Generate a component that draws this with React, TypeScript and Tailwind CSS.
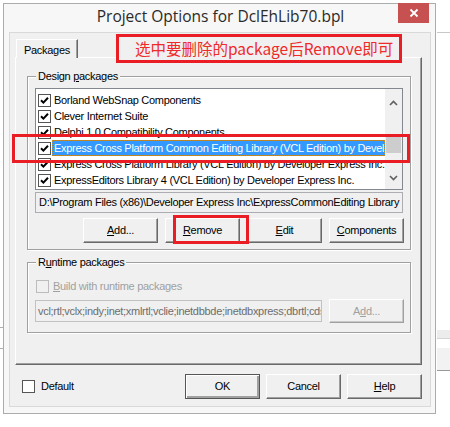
import React from 'react';

const rows = [
  'Borland WebSnap Components',
  'Clever Internet Suite',
  'Delphi 1.0 Compatibility Components',
  'Express Cross Platform Common Editing Library (VCL Edition) by Developer Express Inc.',
  'Express Cross Platform Library (VCL Edition) by Developer Express Inc.',
  'ExpressEditors Library 4 (VCL Edition) by Developer Express Inc.',
];

function Check({ on = true, disabled = false }: { on?: boolean; disabled?: boolean }) {
  return (
    <span
      className={
        disabled
          ? 'w-[13px] h-[13px] shrink-0 border border-[#bcbcbc] bg-[#f0f0f0]'
          : 'w-[13px] h-[13px] shrink-0 border border-[#555] bg-white flex items-center justify-center'
      }
    >
      {on && (
        <svg width="11" height="11" viewBox="0 0 11 11">
          <path d="M2 5.2 L4.4 7.6 L9 2.8" fill="none" stroke="#000" strokeWidth="2" />
        </svg>
      )}
    </span>
  );
}

function Btn({ children, def = false, disabled = false }: { children: React.ReactNode; def?: boolean; disabled?: boolean }) {
  let cls =
    'w-[75px] h-[25px] shrink-0 flex items-center justify-center bg-[#f0f0f0] border border-t-white border-l-white border-r-[#696969] border-b-[#696969] shadow-[inset_-1px_-1px_0_#a0a0a0] text-black';
  if (def)
    cls =
      'w-[75px] h-[25px] shrink-0 flex items-center justify-center bg-[#f0f0f0] border border-[#555] shadow-[inset_1px_1px_0_#fff,inset_-2px_-2px_0_#a0a0a0] text-black';
  if (disabled)
    cls =
      'w-[75px] h-[24px] shrink-0 flex items-center justify-center bg-[#f0f0f0] border border-t-white border-l-white border-r-[#a0a0a0] border-b-[#a0a0a0] shadow-[inset_-1px_-1px_0_#c8c8c8] text-[#a0a0a0]';
  return <div className={cls}>{children}</div>;
}

function GroupBox({ label, className, children }: { label: React.ReactNode; className: string; children: React.ReactNode }) {
  return (
    <div className={'relative border border-[#a0a0a0] shadow-[inset_1px_1px_0_#fff,1px_1px_0_#fff] ' + className}>
      <span className="absolute -top-[8px] left-[8px] px-[2px] bg-[#f0f0f0] leading-[14px]">{label}</span>
      {children}
    </div>
  );
}

export default function App() {
  return (
    <div className="relative w-[450px] h-[427px] overflow-hidden bg-white pt-[3px] pl-[3px] font-['Liberation_Sans',Arial,sans-serif] text-[11px] tracking-[-0.3px] text-black">
      {/* bits of windows behind the dialog */}
      <div className="absolute left-[437px] top-[32px] w-[13px] h-[1px] bg-[#c8c8c8]" />
      <div className="absolute left-[437px] top-[330px] w-[13px] h-[9px] bg-[#ececec] border-b border-[#d4d4d4]" />
      <div className="absolute left-[437px] top-[348px] w-[13px] h-[23px] bg-[#f2f2f2] border-b border-[#9a9a9a]" />
      <div className="absolute left-0 top-[327px] w-[3px] h-[1px] bg-[#b0b0b0]" />
      <div className="absolute left-0 top-[348px] w-[3px] h-[1px] bg-[#b0b0b0]" />

      {/* dialog window */}
      <div className="flex flex-col w-[433px] h-[411px] border border-[#acacac] bg-[#f7f7f7]">
        <div className="relative h-[28px] flex items-center justify-center">
          <span className="font-['Open_Sans','Noto_Sans',sans-serif] text-[15.5px] tracking-normal text-[#2a2a2a] -mt-[2px] ml-[2px]">
            Project Options for DclEhLib70.bpl
          </span>
          <div className="absolute right-[6px] -top-[1px] w-[31px] h-[20px] bg-[#c75050] flex items-center justify-center">
            <svg width="10" height="10" viewBox="0 0 10 10">
              <path d="M1.5 1.5 L8.5 8.5 M8.5 1.5 L1.5 8.5" stroke="#fff" strokeWidth="1.8" />
            </svg>
          </div>
        </div>

        <div className="ml-[5px] mr-[4px] h-[375px] border border-[#d9d9d9] bg-[#f0f0f0] flex flex-col">
          {/* tab strip */}
          <div className="pl-[5px] pt-[6px]">
            <div className="ml-[1px] relative z-10 w-[62px] h-[19px] -mb-[1px] bg-[#f0f0f0] border-t border-l border-white border-r border-r-[#696969] shadow-[inset_-1px_0_0_#a0a0a0] pl-[7px] pt-[2px]">
              Packages
            </div>
            <div className="w-[407px] h-[308px] border border-t-white border-l-white border-r-[#696969] border-b-[#696969] shadow-[inset_-1px_-1px_0_#a0a0a0] pl-[11px] pt-[18px]">
              <GroupBox
                className="w-[384px] h-[174px] pl-[7px] pt-[11px]"
                label={
                  <>
                    Design <u>p</u>ackages
                  </>
                }
              >
                {/* check list */}
                <div className="w-[368px] h-[102px] border border-[#828790] bg-white flex overflow-hidden">
                  <div className="flex-1 min-w-0 pt-[3px] overflow-hidden">
                    {rows.map((r, i) => (
                      <div key={r} className="h-[16px] flex items-center pl-[2px] whitespace-nowrap">
                        <Check />
                        {i === 3 ? (
                          <span className="ml-[1px] flex-1 min-w-0 h-[16px] bg-[#3399ff] text-white border border-dotted border-[#c58a2a] pl-[1px] leading-[14px] overflow-hidden">
                            {r}
                          </span>
                        ) : (
                          <span className="ml-[3px] leading-[16px]">{r}</span>
                        )}
                      </div>
                    ))}
                  </div>
                  <div className="w-[17px] shrink-0 bg-[#f0f0f0] flex flex-col items-center">
                    <div className="h-[17px] w-full flex items-center justify-center mt-[5px]">
                      <svg width="9" height="6" viewBox="0 0 9 6">
                        <path d="M1 5 L4.5 1.5 L8 5" fill="none" stroke="#606060" strokeWidth="1.6" />
                      </svg>
                    </div>
                    <div className="mt-[25px] w-[15px] h-[17px] bg-[#cdcdcd]" />
                    <div className="mt-auto mb-[3px] h-[17px] w-full flex items-center justify-center">
                      <svg width="9" height="6" viewBox="0 0 9 6">
                        <path d="M1 1 L4.5 4.5 L8 1" fill="none" stroke="#606060" strokeWidth="1.6" />
                      </svg>
                    </div>
                  </div>
                </div>

                {/* path edit */}
                <div className="mt-[2px] w-[368px] h-[21px] border border-[#abadb3] bg-[#f0f0f0] pl-[3px] leading-[19px] whitespace-nowrap overflow-hidden">
                  D:\Program Files (x86)\Developer Express Inc\ExpressCommonEditing Library (VCL Edition)
                </div>

                <div className="mt-[5px] flex gap-[7px] pl-[48px]">
                  <Btn>
                    <span><u>A</u>dd...</span>
                  </Btn>
                  <Btn>
                    <span><u>R</u>emove</span>
                  </Btn>
                  <Btn>
                    <span><u>E</u>dit</span>
                  </Btn>
                  <Btn>
                    <span><u>C</u>omponents</span>
                  </Btn>
                </div>
              </GroupBox>

              <GroupBox
                className="mt-[12px] w-[384px] h-[71px] pl-[7px] pt-[17px]"
                label={
                  <>
                    R<u>u</u>ntime packages
                  </>
                }
              >
                <div className="flex items-center h-[13px] pl-[1px]">
                  <Check on={false} disabled />
                  <span className="ml-[4px] text-[#a0a0a0]">
                    <u>B</u>uild with runtime packages
                  </span>
                </div>
                <div className="mt-[6px] flex items-center">
                  <div className="w-[287px] h-[22px] border border-[#c2c2c2] bg-[#f0f0f0] pl-[2px] leading-[20px] text-[#6d6d6d] whitespace-nowrap overflow-hidden">
                    vcl;rtl;vclx;indy;inet;xmlrtl;vclie;inetdbbde;inetdbxpress;dbrtl;cds
                  </div>
                  <div className="ml-[7px]">
                    <Btn disabled>
                      <span>A<u>d</u>d...</span>
                    </Btn>
                  </div>
                </div>
              </GroupBox>
            </div>
          </div>

          {/* bottom row */}
          <div className="mt-[9px] flex items-center pl-[12px] pr-[8px]">
            <Check on={false} />
            <span className="ml-[6px]">Default</span>
            <div className="ml-auto flex gap-[6px]">
              <Btn def>OK</Btn>
              <Btn>Cancel</Btn>
              <Btn>
                <span><u>H</u>elp</span>
              </Btn>
            </div>
          </div>
        </div>
      </div>

      {/* annotations */}
      <div className="absolute left-[116px] top-[34px] w-[286px] h-[29px] border-[3px] border-[#ea1c24] bg-[#f0f0f0] flex items-center pl-[16px] whitespace-nowrap font-['Noto_Sans_CJK_SC',sans-serif] text-[15.5px] tracking-normal text-[#ee2a2a]">
        选中要删除的package后Remove即可
      </div>
      <div className="absolute left-[12px] top-[134px] w-[398px] h-[29px] border-[3px] border-[#ea1c24]" />
      <div className="absolute left-[173px] top-[215px] w-[76px] h-[29px] border-[3px] border-[#ea1c24]" />
    </div>
  );
}
